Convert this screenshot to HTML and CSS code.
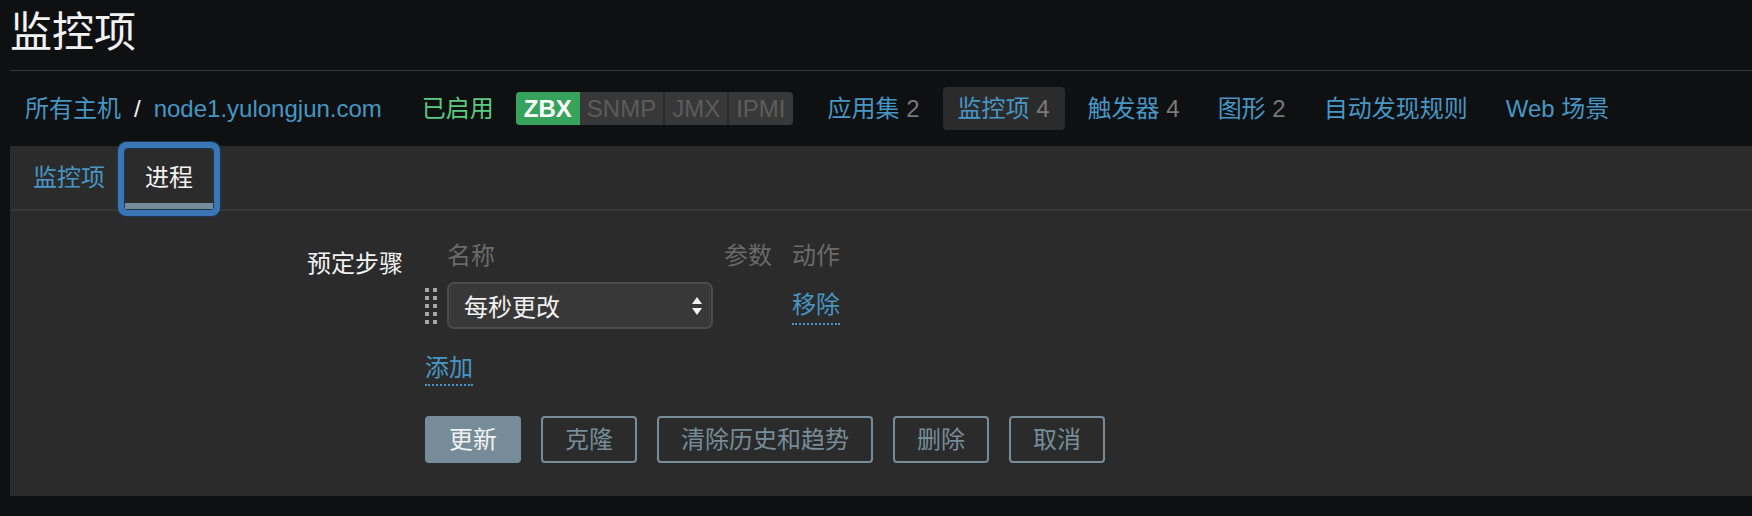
FILE: index.html
```html
<!DOCTYPE html>
<html lang="zh-CN">
<head>
<meta charset="utf-8">
<title>监控项</title>
<link rel="stylesheet" href="styles.css">
</head>
<body>
<header class="page-header"><h1 class="page-title">监控项</h1></header>
<nav class="host-nav">
  <div class="crumbs">
    <a class="link">所有主机</a><span class="sep">/</span><a class="link">node1.yulongjun.com</a>
  </div>
  <span class="status-on">已启用</span>
  <div class="status-box"><span class="st st-green">ZBX</span><span class="st">SNMP</span><span class="st st-sep">JMX</span><span class="st st-sep">IPMI</span></div>
  <ul class="nav-list">
    <li class="nav-item"><a class="link">应用集</a> <span class="count">2</span></li>
    <li class="nav-item selected"><a class="link">监控项</a> <span class="count">4</span></li>
    <li class="nav-item"><a class="link">触发器</a> <span class="count">4</span></li>
    <li class="nav-item"><a class="link">图形</a> <span class="count">2</span></li>
    <li class="nav-item"><a class="link">自动发现规则</a></li>
    <li class="nav-item"><a class="link">Web 场景</a></li>
  </ul>
</nav>
<main class="panel">
  <div class="tabs">
    <a class="tab">监控项</a>
    <a class="tab active">进程</a>
  </div>
  <div class="form">
    <label class="form-label">预定步骤</label>
    <div class="form-field">
      <div class="steps-head"><span></span><span>名称</span><span>参数</span><span>动作</span></div>
      <div class="steps-row">
        <span class="handle"><svg width="12" height="36" viewBox="0 0 12 36"><g fill="#a2aaad"><rect x="0" y="0" width="4" height="4"/><rect x="8" y="0" width="4" height="4"/><rect x="0" y="8" width="4" height="4"/><rect x="8" y="8" width="4" height="4"/><rect x="0" y="16" width="4" height="4"/><rect x="8" y="16" width="4" height="4"/><rect x="0" y="24" width="4" height="4"/><rect x="8" y="24" width="4" height="4"/><rect x="0" y="32" width="4" height="4"/><rect x="8" y="32" width="4" height="4"/></g></svg></span>
        <div class="select"><span>每秒更改</span><svg width="12" height="24" viewBox="0 0 12 24"><g fill="#f2f2f2"><polygon points="6,3 11,10 1,10"/><polygon points="1,14 11,14 6,21"/></g></svg></div>
        <span></span>
        <span><a class="dotted remove">移除</a></span>
      </div>
      <div class="add-row"><a class="dotted">添加</a></div>
    </div>
    <span></span>
    <div class="buttons">
      <button class="btn primary">更新</button>
      <button class="btn">克隆</button>
      <button class="btn">清除历史和趋势</button>
      <button class="btn">删除</button>
      <button class="btn">取消</button>
    </div>
  </div>
</main>
</body>
</html>
```

FILE: styles.css
```css
* { box-sizing: border-box; }
html, body { margin: 0; padding: 0; }
body {
  width: 1752px;
  height: 516px;
  overflow: hidden;
  background: #0e1012;
  color: #f2f2f2;
  font-family: "Liberation Sans", "Noto Sans CJK SC", sans-serif;
  font-size: 24px;
}
a { text-decoration: none; cursor: pointer; }
.link { color: #4796c4; }

.page-header {
  margin-left: 10px;
  height: 71px;
  border-bottom: 1px solid #383838;
}
.page-title {
  margin: 0;
  padding-top: 12px;
  font-size: 42px;
  line-height: 42px;
  font-weight: normal;
  color: #f2f2f2;
}

.host-nav {
  margin-left: 10px;
  height: 75px;
  display: flex;
  align-items: center;
  line-height: 30px;
}
.crumbs { padding-left: 15px; display: flex; }
.sep { margin: 0 13px; color: #f2f2f2; }
.status-on { margin-left: 40px; color: #5ccb80; }
.status-box {
  margin-left: 22px;
  display: flex;
  height: 33px;
  border-radius: 4px;
  overflow: hidden;
  background: #383838;
  line-height: 33px;
}
.st { padding: 0 7px; color: #5c5c5c; }
.st-green { padding: 0 8px; background: #36a35d; color: #ffffff; font-weight: bold; }
.st-sep { border-left: 2px solid #2b2b2b; }
.nav-list {
  list-style: none;
  margin: 0 0 0 20px;
  padding: 0;
  display: flex;
  gap: 8px;
}
.nav-item {
  height: 43px;
  line-height: 43px;
  padding: 0 15px;
  border-radius: 4px;
}
.nav-item.selected { background: #2b2b2b; }
.count { color: #7a7a7a; }

.panel {
  margin-left: 10px;
  height: 350px;
  background: #2b2b2b;
}
.tabs {
  height: 65px;
  padding-left: 3px;
  border-bottom: 2px solid #383838;
  display: flex;
  align-items: flex-end;
}
.tab {
  height: 63px;
  line-height: 63px;
  padding: 0 20px;
  color: #4796c4;
}
.tab.active {
  position: relative;
  height: 60px;
  line-height: 57px;
  color: #f2f2f2;
  border-radius: 3px;
  box-shadow: 0 0 0 1px #1e3552, 0 0 0 7px #3b76b4, 0 0 0 8px #1c3658;
}
.tab.active::after {
  content: "";
  position: absolute;
  left: 0;
  right: 0;
  bottom: 0;
  height: 6px;
  background: #768d99;
}

.form {
  display: grid;
  grid-template-columns: 393px auto;
  column-gap: 22px;
  padding-top: 30px;
}
.form-label {
  text-align: right;
  line-height: 30px;
  padding-top: 8px;
  color: #f2f2f2;
}
.steps-head, .steps-row {
  display: grid;
  grid-template-columns: 22px 277px 68px auto;
}
.steps-head {
  height: 30px;
  line-height: 30px;
  color: #6a6a6a;
}
.steps-row {
  margin-top: 11px;
  height: 47px;
  align-items: center;
}
.handle { display: flex; align-items: center; }
.handle svg { display: block; }
.select {
  width: 266px;
  height: 47px;
  border: 2px solid #4b4b4b;
  border-radius: 7px;
  background: #383838;
  display: flex;
  align-items: center;
  justify-content: space-between;
  padding: 0 8px 0 15px;
  color: #f2f2f2;
}
.select svg { display: block; }
.dotted {
  display: inline-block;
  color: #4796c4;
  line-height: 30px;
  border-bottom: 2px dotted #4796c4;
}
.remove { padding-bottom: 3px; margin-top: 4px; }
.add-row { margin-top: 24px; height: 33px; }
.add-row .dotted { padding-bottom: 1px; }

.buttons {
  display: flex;
  gap: 20px;
  margin-top: 30px;
}
.btn {
  height: 47px;
  padding: 0 22px;
  border: 2px solid #768d99;
  border-radius: 4px;
  background: transparent;
  color: #768d99;
  font-family: "Liberation Sans", "Noto Sans CJK SC", sans-serif;
  font-size: 24px;
  line-height: 30px;
}
.btn.primary {
  background: #768d99;
  color: #f2f2f2;
}
```
